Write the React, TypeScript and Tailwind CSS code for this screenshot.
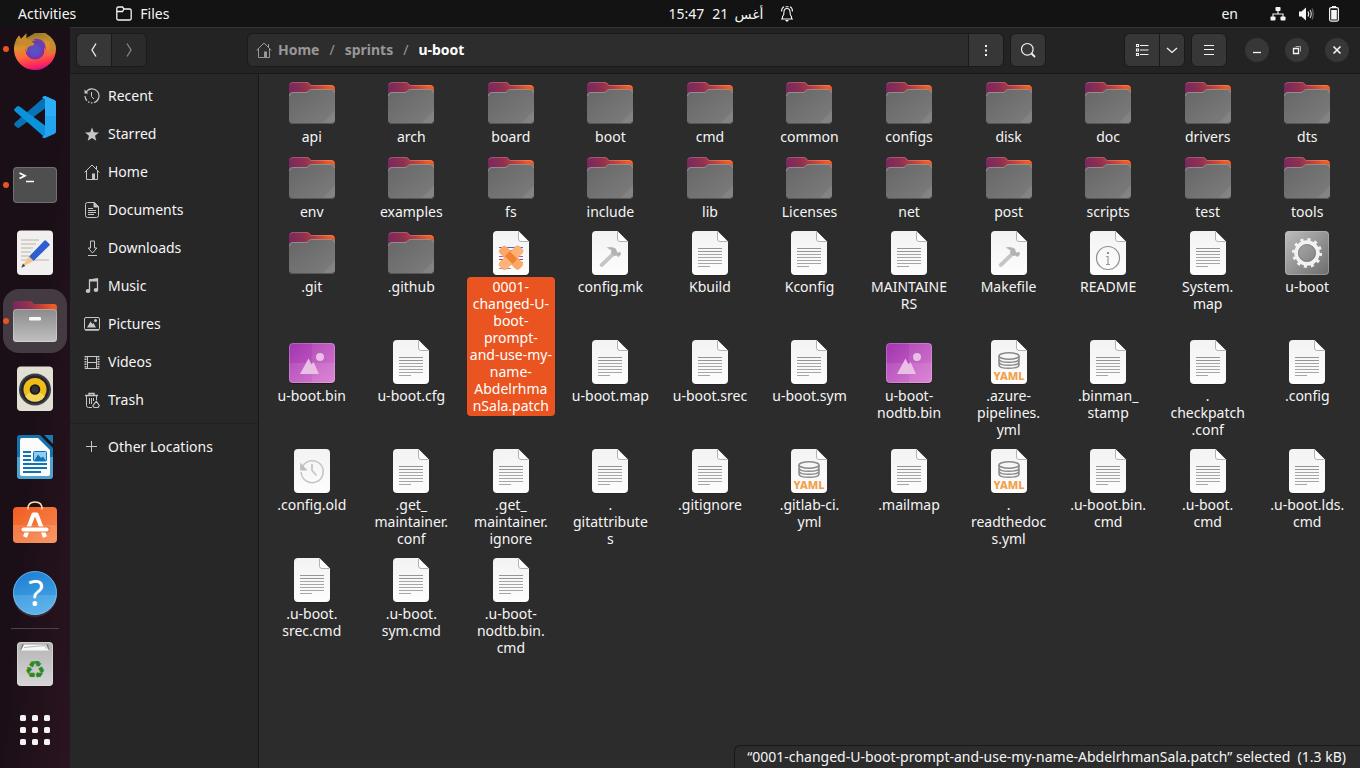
import type { ReactNode } from "react";

type Kind =
  | "folder"
  | "text"
  | "patch"
  | "make"
  | "info"
  | "exec"
  | "binary"
  | "yaml"
  | "backup";

type Item = { kind: Kind; label: string; selected?: boolean };

const folder = (label: string): Item => ({ kind: "folder", label });
const text = (label: string): Item => ({ kind: "text", label });

const items: Item[] = [
  ...["api", "arch", "board", "boot", "cmd", "common", "configs", "disk", "doc", "drivers", "dts"].map(folder),
  ...["env", "examples", "fs", "include", "lib", "Licenses", "net", "post", "scripts", "test", "tools"].map(folder),
  folder(".git"),
  folder(".github"),
  {
    kind: "patch",
    label: "0001-\nchanged-U-\nboot-\nprompt-\nand-use-my-\nname-\nAbdelrhma\nnSala.patch",
    selected: true,
  },
  { kind: "make", label: "config.mk" },
  text("Kbuild"),
  text("Kconfig"),
  text("MAINTAINE\nRS"),
  { kind: "make", label: "Makefile" },
  { kind: "info", label: "README" },
  text("System.\nmap"),
  { kind: "exec", label: "u-boot" },
  { kind: "binary", label: "u-boot.bin" },
  text("u-boot.cfg"),
];

const itemsAfterPatch: Item[] = [
  text("u-boot.map"),
  text("u-boot.srec"),
  text("u-boot.sym"),
  { kind: "binary", label: "u-boot-\nnodtb.bin" },
  { kind: "yaml", label: ".azure-\npipelines.\nyml" },
  text(".binman_\nstamp"),
  text(".\ncheckpatch\n.conf"),
  text(".config"),
  { kind: "backup", label: ".config.old" },
  text(".get_\nmaintainer.\nconf"),
  text(".get_\nmaintainer.\nignore"),
  text(".\ngitattribute\ns"),
  text(".gitignore"),
  { kind: "yaml", label: ".gitlab-ci.\nyml" },
  text(".mailmap"),
  { kind: "yaml", label: ".\nreadthedoc\ns.yml" },
  text(".u-boot.bin.\ncmd"),
  text(".u-boot.\ncmd"),
  text(".u-boot.lds.\ncmd"),
  text(".u-boot.\nsrec.cmd"),
  text(".u-boot.\nsym.cmd"),
  text(".u-boot-\nnodtb.bin.\ncmd"),
];

function Gradients() {
  return (
    <svg width="0" height="0" className="absolute" aria-hidden="true">
      <defs>
        <linearGradient id="folderBack" gradientUnits="userSpaceOnUse" x1="1" y1="16" x2="45" y2="5">
          <stop offset="0" stopColor="#772660" />
          <stop offset="0.35" stopColor="#8e3050" />
          <stop offset="0.6" stopColor="#b83c40" />
          <stop offset="0.9" stopColor="#ee5a26" />
        </linearGradient>
        <linearGradient id="folderFront" x1="0" y1="0" x2="1" y2="1">
          <stop offset="0" stopColor="#666666" />
          <stop offset="1" stopColor="#7d7d7d" />
        </linearGradient>
        <linearGradient id="paper" x1="0" y1="0" x2="0" y2="1">
          <stop offset="0" stopColor="#f3f3f3" />
          <stop offset="1" stopColor="#fdfdfd" />
        </linearGradient>
        <linearGradient id="binary" x1="0" y1="0" x2="1" y2="1">
          <stop offset="0" stopColor="#a035ae" />
          <stop offset="1" stopColor="#d870cf" />
        </linearGradient>
        <linearGradient id="exec" x1="0" y1="0" x2="1" y2="1">
          <stop offset="0" stopColor="#bdbdbd" />
          <stop offset="1" stopColor="#6c6c6c" />
        </linearGradient>
        <linearGradient id="fox" x1="0.35" y1="0" x2="0.55" y2="1">
          <stop offset="0" stopColor="#8a7628" />
          <stop offset="0.35" stopColor="#dc932e" />
          <stop offset="0.6" stopColor="#ff6a3c" />
          <stop offset="0.85" stopColor="#ff2b58" />
          <stop offset="1" stopColor="#d8108a" />
        </linearGradient>
        <radialGradient id="globe">
          <stop offset="0" stopColor="#4c5bc9" />
          <stop offset="0.6" stopColor="#6446bd" />
          <stop offset="1" stopColor="#7a2ba6" />
        </radialGradient>
        <linearGradient id="filesFront" x1="0" y1="0" x2="0" y2="1">
          <stop offset="0" stopColor="#8b8b8b" />
          <stop offset="1" stopColor="#c0c0c0" />
        </linearGradient>
        <linearGradient id="bag" x1="0" y1="0" x2="1" y2="1">
          <stop offset="0" stopColor="#f25c22" />
          <stop offset="1" stopColor="#f68a50" />
        </linearGradient>
        <linearGradient id="help" x1="0" y1="0" x2="0.3" y2="1">
          <stop offset="0" stopColor="#1c7bd0" />
          <stop offset="1" stopColor="#44a8e8" />
        </linearGradient>
        <linearGradient id="can" x1="0" y1="0" x2="0" y2="1">
          <stop offset="0" stopColor="#b4b4b4" />
          <stop offset="1" stopColor="#d6d6d6" />
        </linearGradient>
      </defs>
    </svg>
  );
}

function Svg48({ children }: { children: ReactNode }) {
  return (
    <svg viewBox="0 0 48 48" className="size-12 shrink-0" aria-hidden="true">
      {children}
    </svg>
  );
}

function Sheet({ children, fold = true }: { children: ReactNode; fold?: boolean }) {
  return (
    <Svg48>
      {fold ? (
        <>
          <path d="M10 3H32L42 13V42.500a4 4 0 0 1-4 4h-28A4 4 0 0 1 6 42.500V7A4 4 0 0 1 10 3Z" fill="#1c1c1c" />
          <path d="M10 2H31.500L42 12.500V42a4 4 0 0 1-4 4H10a4 4 0 0 1-4-4V6a4 4 0 0 1 4-4Z" fill="url(#paper)" />
          <path d="M31.500 2.500V10a2.500 2.500 0 0 0 2.500 2.500h7.500" fill="#fff" stroke="#b2b2b2" strokeWidth="1" />
        </>
      ) : (
        <>
          <rect x="6" y="3" width="36" height="43.500" rx="4" fill="#1c1c1c" />
          <rect x="6" y="2" width="36" height="44" rx="4" fill="url(#paper)" />
        </>
      )}
      {children}
    </Svg48>
  );
}

function FileIcon({ kind }: { kind: Kind }) {
  switch (kind) {
    case "folder":
      return (
        <Svg48>
          <path d="M1 18V7a4 4 0 0 1 4-4H19q1.200 0 2 .8L23 6H43a4 4 0 0 1 4 4V18Z" fill="url(#folderBack)" />
          <path d="M2 5.500a4 4 0 0 1 3-2H19q1 0 1.700 .8L23 6.500H43a3.500 3.500 0 0 1 3 2" fill="none" stroke="#fff" strokeOpacity=".2" />
          <path d="M1 17a4 4 0 0 1 4-4H18q1.200 0 2-.8l1.300-1.400q.8-.8 2-.8H43a4 4 0 0 1 4 4V41a4 4 0 0 1-4 4H5a4 4 0 0 1-4-4Z" fill="url(#folderFront)" />
          <path d="M1.500 17A3.500 3.500 0 0 1 5 13.500H18q1.200 0 2-.8l1.300-1.400q.8-.8 2-.8H43a3.500 3.500 0 0 1 3.500 3.500" fill="none" stroke="#8f8f8f" />
          <path d="M47 31V41a4 4 0 0 1-4 4H34Z" fill="#fff" fillOpacity=".07" />
          <path d="M2 43a3.500 3.500 0 0 0 3 1.500H43a3.500 3.500 0 0 0 3-1.500" fill="none" stroke="#575757" />
        </Svg48>
      );
    case "patch":
      return (
        <Sheet>
          <path d="M12 18.500H36" stroke="#4668d8" />
          <path d="M12 21.500H36" stroke="#e05a6a" />
          <path d="M12 27.500H36" stroke="#8d62c9" />
          <path d="M12 30.500H36" stroke="#d0313c" />
          <path d="M28 33.500H36" stroke="#7fb53c" />
          <path d="M12 39.500H24" stroke="#9a9a9a" />
          <rect x="10" y="24" width="28" height="9.500" rx="3.500" fill="#fba869" transform="rotate(45 24 28.700)" />
          <rect x="10" y="24" width="28" height="9.500" rx="3.500" fill="#ffb277" stroke="#ef9857" strokeWidth=".5" transform="rotate(-45 24 28.700)" />
          <rect x="18.500" y="25" width="11" height="7" rx="1" fill="#f08232" transform="rotate(45 24 28.700)" />
        </Sheet>
      );
    case "make":
      return (
        <Sheet>
          <path d="M14.500 34.500 27 22.500l2.500 3L17 37.500q-1.500 1-2.700-.3-1.200-1.500.2-2.700Z" fill="#c5c5c5" />
          <path d="M20.500 18.500q5-1.500 9.500 1.200l1 3.300 1.500.8 1.500-1.300 1.200 2.800-2.700 2.700-2.200-1.500-2.300.5-3-3 .5-2.500q-2-1.700-5-3Z" fill="#b3b3b3" />
        </Sheet>
      );
    case "info":
      return (
        <Sheet>
          <circle cx="24" cy="29" r="11.500" fill="none" stroke="#8e8e8e" strokeWidth="1.200" />
          <rect x="23" y="23" width="2" height="2" fill="#8e8e8e" />
          <path d="M22 27.500h2v8m-2 0h4" fill="none" stroke="#9a9a9a" strokeWidth="1.200" />
        </Sheet>
      );
    case "backup":
      return (
        <Sheet fold={false}>
          <path d="M14.500 19.500A11 11 0 1 1 13.200 25" fill="none" stroke="#c4c4c4" strokeWidth="1.500" />
          <path d="M12.200 15.500 V23.500H19.500Z" fill="#bdbdbd" />
          <path d="M24 17v6.500l4.500 5" fill="none" stroke="#c4c4c4" strokeWidth="1.700" />
        </Sheet>
      );
    case "yaml":
      return (
        <Sheet>
          <g fill="none" stroke="#8a8a8a" strokeWidth="1.500">
            <ellipse cx="24" cy="18" rx="10" ry="3.300" />
            <path d="M14 18v9c0 4.400 20 4.400 20 0v-9M14 21c0 4.400 20 4.400 20 0M14 24c0 4.400 20 4.400 20 0" />
          </g>
          <text x="24" y="42" textAnchor="middle" className="fill-[#f2a04a] font-['Noto_Sans',sans-serif] text-[11px] font-extrabold">
            YAML
          </text>
        </Sheet>
      );
    case "binary":
      return (
        <Svg48>
          <rect x="1" y="5" width="46" height="41" rx="4" fill="#1e1e1e" />
          <rect x="1" y="5" width="46" height="40" rx="4" fill="url(#binary)" />
          <path d="M24 5h19a4 4 0 0 1 4 4v32a4 4 0 0 1-4 4H24Z" fill="#fff" fillOpacity=".07" />
          <path d="M1 25H47V41a4 4 0 0 1-4 4H5a4 4 0 0 1-4-4Z" fill="#fff" fillOpacity=".09" />
          <rect x="1.500" y="5.500" width="45" height="39" rx="3.500" fill="none" stroke="#fff" strokeOpacity=".2" />
          <circle cx="32" cy="19" r="4" fill="#e9bfe6" />
          <path d="M12 36 20.500 20.500l3 6 2-2.500 5.500 12Z" fill="#e9bfe6" />
        </Svg48>
      );
    case "exec":
      return (
        <Svg48>
          <rect x="2" y="2" width="44" height="44" rx="4" fill="url(#exec)" />
          <rect x="2.500" y="2.500" width="43" height="43" rx="3.500" fill="none" stroke="#c9c9c9" strokeOpacity=".4" />
          <circle cx="24" cy="24" r="13.300" fill="none" stroke="#f4f2f1" strokeWidth="3.400" strokeDasharray="3 3.964" />
          <circle cx="24" cy="24" r="10.800" fill="none" stroke="#f4f2f1" strokeWidth="4" />
          <circle cx="24" cy="24" r="8.500" fill="none" stroke="#777" strokeWidth=".8" />
        </Svg48>
      );
    default:
      return (
        <Sheet>
          <path d="M12 19.500H36M12 22.500H36" stroke="#959595" />
          <path d="M12 25.500H36M12 28.500H36M12 31.500H36M12 34.500H36M12 37.500H24" stroke="#a6a6a6" />
        </Sheet>
      );
  }
}

function FileItem({ kind, label, selected }: Item) {
  return (
    <li className="min-w-0">
      <button type="button" className="flex w-full flex-col items-center">
        <FileIcon kind={kind} />
        {selected ? (
          <span className="h-[53px]">
            <span className="relative z-10 block rounded bg-[#e95420] px-[3px] pt-px pb-0.5 leading-[17px] whitespace-pre-line text-white">
              {label}
            </span>
          </span>
        ) : (
          <span className="block pt-px pb-px leading-[17px] whitespace-pre-line">{label}</span>
        )}
      </button>
    </li>
  );
}

function S16({ children, className = "size-4" }: { children: ReactNode; className?: string }) {
  return (
    <svg viewBox="0 0 16 16" className={className} fill="none" stroke="currentColor" strokeWidth="1" aria-hidden="true">
      {children}
    </svg>
  );
}

const homeIcon = (
  <S16 className="size-4 shrink-0">
    <path d="M.6 8.400 8 1l7.400 7.400M12.500 2v3.500M2.500 7v8.500h11V7" />
    <path d="M8 15.500V9.500h3v6Z" fill="currentColor" stroke="none" />
  </S16>
);

const places: { label: string; icon: ReactNode }[] = [
  {
    label: "Recent",
    icon: (
      <S16>
        <path d="M2 4.300A7 7 0 1 1 1 8" strokeWidth="1.200" strokeDasharray="27 1.500 1.500 1.500 1.500 1.500 20" />
        <path d="M.5 1.500V5.500H4.500Z" fill="currentColor" stroke="none" />
        <path d="M7.500 4v4.500l2.500 2.500" />
      </S16>
    ),
  },
  {
    label: "Starred",
    icon: (
      <S16>
        <path d="M8 1.500 9.800 6.200 15 6.500 11 9.800 12.300 14.700 8 12 3.700 14.700 5 9.800 1 6.500 6.200 6.200Z" fill="currentColor" stroke="none" />
      </S16>
    ),
  },
  { label: "Home", icon: homeIcon },
  {
    label: "Documents",
    icon: (
      <S16>
        <path d="M3.500 .5H10.500l4 4V13.500a2 2 0 0 1-2 2h-9a2 2 0 0 1-2-2V2.500a2 2 0 0 1 2-2Z" />
        <path d="M10 .5v4.500h4.500Z" fill="currentColor" />
        <path d="M4 6.500h5M4 8.500h8M4 10.500h8M4 12.500h6" />
      </S16>
    ),
  },
  {
    label: "Downloads",
    icon: (
      <S16>
        <path d="M6.500 1v7H4.200L8.500 13 12.800 8H10.500V1ZM4 15.500h9" />
      </S16>
    ),
  },
  {
    label: "Music",
    icon: (
      <S16>
        <path d="M5.500 12.500V2L13.500 1V11.500" strokeWidth="1.300" />
        <path d="M5.500 3V1.800L13.500.8V3Z" fill="currentColor" />
        <ellipse cx="4" cy="13" rx="2.300" ry="1.900" fill="currentColor" stroke="none" />
        <ellipse cx="12" cy="12" rx="2.300" ry="1.900" fill="currentColor" stroke="none" />
      </S16>
    ),
  },
  {
    label: "Pictures",
    icon: (
      <S16>
        <rect x=".5" y="1.500" width="15" height="12.500" rx="1.500" />
        <path d="M1 13H15V14.500H1Z" fill="currentColor" stroke="none" />
        <path d="M3 11.500 6.500 5.500 8.500 8 9.500 7 12 11.500Z" fill="currentColor" stroke="none" />
        <circle cx="11.500" cy="4.500" r="1.500" fill="currentColor" stroke="none" />
      </S16>
    ),
  },
  {
    label: "Videos",
    icon: (
      <S16>
        <path d="M3.500 2.500h9v12h-9ZM3.500 8.500h9" />
        <path d="M1.500 2v13M14.500 2v13" strokeWidth="2" strokeDasharray="1.500 1" />
        <path d="M1 2.500h3M1 14.500h3M12 2.500h3M12 14.500h3" />
      </S16>
    ),
  },
  {
    label: "Trash",
    icon: (
      <S16>
        <path d="M1 3.500h13M5 3V1.500h5V3" strokeWidth="1.400" />
        <path d="M2.500 4v9.500a2 2 0 0 0 2 2H8M12.500 4v4M5.500 6v6M7.500 6v6M9.500 6v3" />
        <path d="M9 13.500a3 2 0 0 0 1.500 2h3.500l1.300-2-3-4.200Z" strokeWidth="1.200" />
      </S16>
    ),
  },
];

type DockEntry = { label: string; icon: ReactNode; running?: boolean; active?: boolean };

const dock: DockEntry[] = [
  {
    label: "Firefox",
    running: true,
    icon: (
      <Svg48>
        <path d="M24 45A21 21 0 0 1 5 15L8 10.500 10 14 15.500 8V13L24 8H34Q45 15 45 24A21 21 0 0 1 24 45Z" fill="url(#fox)" />
        <path d="M28 8Q35 8.500 36 13Q42 19 37 31Q44 27 45 23Q44 13 34 8Z" fill="#b98f2c" fillOpacity=".75" />
        <circle cx="24" cy="25" r="9.500" fill="url(#globe)" />
        <path d="M5 15 8 10.500 10 14 15 9V14Q20 14.500 23.500 19Q22 21.500 19 21Q15 23 16.500 28Q14 25 15 21Q9 20 5 15Z" fill="#c98a2b" />
        <path d="M22 14Q31 13 34 19L36 31Q36 22 29 20Q27 16 22 14Z" fill="#6a3fae" />
      </Svg48>
    ),
  },
  {
    label: "Visual Studio Code",
    icon: (
      <Svg48>
        <path d="M34 3.500 34 15.500 8.500 34.500Q7 35.400 5.800 34.300L3.600 32.200Q2.500 31 3.600 29.900Z" fill="#0872b4" />
        <path d="M34 44.500V32.500L8.500 13.500Q7 12.600 5.800 13.700L3.600 15.800Q2.500 17 3.600 18.100Z" fill="#0a92dc" />
        <path d="M34 3 43.700 7.300Q45 8 45 9.500V38.500Q45 40 43.700 40.700L34 45Q32.500 45.500 31 44L34 42Z" fill="#23a4f1" />
        <path d="M34 3 43.700 7.300Q45 8 45 9.500V23H34V6L31 4.500Q32.500 2.700 34 3Z" fill="#2aaef5" />
      </Svg48>
    ),
  },
  {
    label: "Terminal",
    running: true,
    icon: (
      <Svg48>
        <rect x="2" y="6" width="44" height="36" rx="4" fill="#4e4e4e" />
        <rect x="2.500" y="6.500" width="43" height="35" rx="3.500" fill="none" stroke="#707070" />
        <path d="M8.500 12 14 14.700 8.500 17.500M15 20.500h8" fill="none" stroke="#fff" strokeWidth="1.700" />
      </Svg48>
    ),
  },
  {
    label: "Text Editor",
    icon: (
      <Svg48>
        <rect x="6" y="1.500" width="36" height="44.500" rx="4" fill="#f1f0ee" />
        <path d="M10 11H28M10 15H25M10 19H22M10 23H20M10 27H18M10 31H38" stroke="#cbc8ba" strokeWidth="1.600" />
        <path d="M18 27.500 33.500 11.500q.7-.7 1.400 0l3.500 3.500q.7.700 0 1.400L22.500 32Z" fill="#2f5ed0" />
        <path d="M18 27.500 22.500 32 10.300 38.500Z" fill="#f3c48c" />
        <path d="M12 34.500 10.300 38.800 14.300 37Z" fill="#444" />
      </Svg48>
    ),
  },
  {
    label: "Files",
    running: true,
    active: true,
    icon: (
      <Svg48>
        <path d="M2 18V7a3 3 0 0 1 3-3H20L23 7H43a3 3 0 0 1 3 3V18Z" fill="url(#folderBack)" />
        <rect x="2" y="12" width="44" height="33" rx="3.500" fill="url(#filesFront)" />
        <rect x="2.500" y="12.500" width="43" height="32" rx="3" fill="none" stroke="#fff" strokeOpacity=".25" />
        <rect x="18" y="20" width="12" height="3.500" rx="1.200" fill="#fafafa" />
      </Svg48>
    ),
  },
  {
    label: "Rhythmbox",
    icon: (
      <Svg48>
        <rect x="6" y="1.500" width="36" height="44.500" rx="4" fill="#e2dfd3" />
        <circle cx="24" cy="24.500" r="16" fill="#3e3e48" />
        <circle cx="24" cy="24.500" r="14" fill="#25252e" />
        <circle cx="24" cy="24.500" r="11.500" fill="#eebd1a" />
        <path d="M14 31a11.500 11.500 0 0 0 20 0L28 27H20Z" fill="#f6d658" />
        <circle cx="24" cy="24.500" r="5.300" fill="#1b1b1b" />
        <circle cx="24" cy="24.500" r="3.500" fill="#333" />
      </Svg48>
    ),
  },
  {
    label: "LibreOffice Writer",
    icon: (
      <Svg48>
        <path d="M9 2H29L42 15V42.500a3.500 3.500 0 0 1-3.500 3.500h-29A3.500 3.500 0 0 1 6 42.500V5A3 3 0 0 1 9 2Z" fill="#1472ac" />
        <path d="M6 24H42V42.500a3.500 3.500 0 0 1-3.500 3.500h-29A3.500 3.500 0 0 1 6 42.500Z" fill="#4fa3cf" />
        <path d="M33 2H42V11Z" fill="#1a7ab4" />
        <path d="M11 5H27L39 17V41a2 2 0 0 1-2 2H11a2 2 0 0 1-2-2V7a2 2 0 0 1 2-2Z" fill="#fbfbfb" />
        <path d="M12 19h8M12 23h8M12 27h8M12 31h24M12 35h24M12 39h18" stroke="#0f74b5" strokeWidth="2" />
        <rect x="22.500" y="18.500" width="13" height="9.500" rx="1" fill="#8fcdf2" stroke="#0f74b5" />
        <path d="M23 28 27 21.500 30 25 32 23.500 35 28Z" fill="#0f74b5" />
      </Svg48>
    ),
  },
  {
    label: "Ubuntu Software",
    icon: (
      <Svg48>
        <rect x="2" y="6" width="44" height="36" rx="4" fill="url(#bag)" />
        <path d="M2 24H46V38a4 4 0 0 1-4 4H6a4 4 0 0 1-4-4Z" fill="#fff" fillOpacity=".12" />
        <path d="M17 8.500Q16.500 1 24 1T31 8.500" fill="none" stroke="#fbe0b0" strokeWidth="1.500" />
        <path d="M14 36 22.500 13.500h3L34 36" fill="none" stroke="#fff" strokeWidth="4.200" strokeLinejoin="round" />
        <path d="M12 28.500H36" stroke="#f5723a" strokeWidth="6" strokeLinecap="round" />
        <path d="M12.500 28.500H35.500" stroke="#fff" strokeWidth="4.200" strokeLinecap="round" />
      </Svg48>
    ),
  },
  {
    label: "Help",
    icon: (
      <Svg48>
        <circle cx="24" cy="24" r="22" fill="url(#help)" />
        <path d="M2 26a22 22 0 0 0 44 0Z" fill="#fff" fillOpacity=".12" />
        <circle cx="24" cy="24" r="21.500" fill="none" stroke="#8cc8f4" strokeOpacity=".6" />
        <text x="25" y="37" textAnchor="middle" className="fill-white font-['Noto_Sans',sans-serif] text-[36px]">
          ?
        </text>
      </Svg48>
    ),
  },
];

function DockButton({ label, icon, running, active }: DockEntry) {
  return (
    <button
      type="button"
      aria-label={label}
      className={
        active
          ? "relative flex size-16 shrink-0 items-center justify-center rounded-2xl bg-[#433b41]"
          : "relative flex size-16 shrink-0 items-center justify-center rounded-2xl"
      }
    >
      {running && <span className="absolute left-0 size-1.5 rounded-full bg-[#e95420]" />}
      {icon}
    </button>
  );
}

const toolButton =
  "flex h-[34px] items-center justify-center border border-[#1a1a1a] bg-[#373737] text-[#f2f2f2]";

export default function App() {
  return (
    <div className="flex h-screen min-h-[600px] flex-col overflow-hidden bg-[#131313] font-['Noto_Sans','DejaVu_Sans',sans-serif] text-sm text-[#f5f5f5]">
      <Gradients />
      <header className="flex h-[27px] shrink-0 items-center px-[18px]">
        <div className="flex flex-1 items-center gap-10">
          <button type="button">Activities</button>
          <button type="button" className="flex items-center gap-2">
            <S16 className="size-4">
              <path d="M.8 12.500V2.500a1.500 1.500 0 0 1 1.500-1.500H6.500l1.500 2h5.500A1.700 1.700 0 0 1 15.200 4.700v7.800a1.500 1.500 0 0 1-1.500 1.500H2.300a1.500 1.500 0 0 1-1.500-1.500ZM.8 5.500H6.500L8 3" strokeWidth="1.300" />
            </S16>
            Files
          </button>
        </div>
        <button type="button" dir="ltr" className="flex items-center pl-26">
          <span>15:47</span>
          <span className="ml-2">21</span>
          <span lang="ar" dir="rtl" className="ml-1.5">أغس</span>
          <svg viewBox="0 0 16 16" className="ml-4 size-4" fill="none" stroke="currentColor" strokeWidth="1.100" aria-hidden="true">
            <path d="M2 13h12M3.500 13V10.500Q5 9.500 5 6Q5 2.500 8 2.500T11 6Q11 9.500 12.500 10.500V13M2.500 5.500Q2.500 2 5 .8M13.500 5.500Q13.500 2 11 .8M6.500 .7H9.500" />
            <path d="M6 14h4L8 16Z" fill="currentColor" stroke="none" />
          </svg>
        </button>
        <div className="flex flex-1 items-center justify-end">
          <span>en</span>
          <button type="button" aria-label="System menu" className="ml-8 flex items-center gap-3">
            <svg viewBox="0 0 16 16" className="size-4" fill="currentColor" aria-hidden="true">
              <rect x="5.500" y="1" width="5" height="4" rx=".8" />
              <rect x=".5" y="10.500" width="5" height="4" rx=".8" />
              <rect x="10.500" y="10.500" width="5" height="4" rx=".8" />
              <path d="M8 5v3M3 11V8h10v3" fill="none" stroke="currentColor" strokeWidth="1.100" />
            </svg>
            <svg viewBox="0 0 16 16" className="size-4" fill="none" stroke="currentColor" strokeWidth="1.200" aria-hidden="true">
              <path d="M1 5.500H3.500L8 1.500V14.500L3.500 10.500H1Z" fill="currentColor" stroke="none" />
              <path d="M10 5.500Q11.500 8 10 10.500" />
              <path d="M12 4Q14.500 8 12 12" opacity=".8" />
              <path d="M14 2.500Q16.500 8 14 13.500" opacity=".35" />
            </svg>
            <svg viewBox="0 0 16 16" className="size-4" fill="none" stroke="currentColor" strokeWidth="1.200" aria-hidden="true">
              <rect x="3.600" y="1.600" width="8.800" height="13.500" rx="1.500" />
              <rect x="5.200" y="4" width="5.600" height="9.500" fill="currentColor" stroke="none" />
              <path d="M6 .6h4" />
            </svg>
          </button>
        </div>
      </header>

      <div className="flex min-h-0 flex-1">
        <nav aria-label="Dock" className="flex w-[70px] shrink-0 flex-col items-center justify-end overflow-hidden bg-linear-to-br from-[#1b0f17] from-50% to-[#2a1421] pb-1.5">
          <div className="flex flex-col gap-1">
            {dock.map((d) => (
              <DockButton key={d.label} {...d} />
            ))}
          </div>
          <hr className="my-[3px] w-12 shrink-0 border-[#4b4348]" />
          <DockButton
            label="Trash"
            icon={
              <div className="relative flex items-center justify-center">
                <Svg48>
                  <rect x="6" y="2" width="36" height="44" rx="4" fill="url(#can)" />
                  <rect x="6.500" y="2.500" width="35" height="43" rx="3.500" fill="none" stroke="#dcdcdc" strokeOpacity=".7" />
                  <path d="M9.500 10 11 4.500H37L38.500 10Z" fill="#777" />
                  <path d="M10 10.500 13 4.500H35L38 10.500Z" fill="#f8f8f8" />
                  <path d="M13 7.500 34 5.500 36 9" fill="none" stroke="#9a9a9a" strokeWidth=".7" />
                </Svg48>
                <span aria-hidden="true" className="absolute bottom-1.5 font-['DejaVu_Sans',sans-serif] text-[24px] leading-6 text-[#2c8a1f]">
                  ♻
                </span>
              </div>
            }
          />
          <button type="button" aria-label="Show Applications" className="mt-0.5 flex size-16 shrink-0 items-center justify-center">
            <svg viewBox="0 0 30 30" className="size-[30px]" fill="#f4f2f3" aria-hidden="true">
              {[0, 12, 24].map((y) =>
                [0, 12, 24].map((x) => <rect key={`${x}-${y}`} x={x} y={y} width="6" height="6" rx="1.500" />),
              )}
            </svg>
          </button>
        </nav>

        <div className="flex min-w-0 flex-1 flex-col">
          <div className="flex h-[47px] shrink-0 items-center border-t border-b border-t-[#343434] border-b-[#181818] bg-[#232323] pr-[11px] pb-0.5 pl-1.5">
            <button type="button" aria-label="Back" className={`${toolButton} w-9 rounded-l-md`}>
              <S16>
                <path d="M10 1.500 6 8l4 6.500" strokeWidth="1.300" />
              </S16>
            </button>
            <button type="button" aria-label="Forward" className="-ml-px flex h-[34px] w-9 items-center justify-center rounded-r-md border border-[#1a1a1a] bg-[#2b2b2b] text-[#858585]">
              <S16>
                <path d="M6 1.500 10 8l-4 6.500" strokeWidth="1.300" />
              </S16>
            </button>

            <div className="ml-[100px] flex h-[34px] min-w-0 flex-1 items-center rounded-l-md border border-[#1a1a1a] bg-[#2d2d2d] pl-2 font-bold text-[#989898]">
              <a href="#home" className="flex items-center gap-1.5">
                {homeIcon}
                Home
              </a>
              <span className="mx-2.5 font-normal">/</span>
              <a href="#sprints">sprints</a>
              <span className="mx-2.5 font-normal">/</span>
              <a href="#u-boot" className="text-white">u-boot</a>
            </div>
            <button type="button" aria-label="Path menu" className={`${toolButton} -ml-px w-9 rounded-r-md`}>
              <S16>
                <path d="M7 3h2v2H7ZM7 7.500h2v2H7ZM7 12h2v2H7Z" fill="currentColor" stroke="none" />
              </S16>
            </button>
            <button type="button" aria-label="Search" className={`${toolButton} ml-1.5 w-9 rounded-md`}>
              <S16>
                <circle cx="7.300" cy="7.300" r="5.800" strokeWidth="1.200" />
                <path d="m11.500 11.500 3.500 3.500" strokeWidth="1.800" />
              </S16>
            </button>

            <div className="ml-[78px] flex">
              <button type="button" aria-label="List view" className={`${toolButton} w-9 rounded-l-md`}>
                <S16>
                  <path d="M6 3.500h8.500M6 8h8.500M6 12.500h8.500" strokeWidth="1.200" />
                  <path d="M2.500 2.500h2v2h-2ZM2.500 7h2v2h-2ZM2.500 11.500h2v2h-2Z" strokeWidth="1.100" />
                </S16>
              </button>
              <button type="button" aria-label="View options" className={`${toolButton} -ml-px w-[26px] rounded-r-md`}>
                <S16>
                  <path d="m3 6 5 4.500L13 6" strokeWidth="1.300" />
                </S16>
              </button>
            </div>
            <button type="button" aria-label="Menu" className={`${toolButton} ml-1.5 w-9 rounded-md`}>
              <S16>
                <path d="M3 3.500h10M3 7.500h10M3 12.500h10" strokeWidth="1.200" />
              </S16>
            </button>
            <div className="ml-[18px] flex gap-4">
              <button type="button" aria-label="Minimize" className="flex size-6 items-center justify-center rounded-full bg-[#373737]">
                <S16>
                  <path d="M4 10.500h8" strokeWidth="1.300" />
                </S16>
              </button>
              <button type="button" aria-label="Restore" className="flex size-6 items-center justify-center rounded-full bg-[#373737]">
                <S16>
                  <path d="M4.500 6.500h5v5h-5Z" strokeWidth="1.300" />
                  <path d="M6.500 4.500h5v5" opacity=".6" />
                </S16>
              </button>
              <button type="button" aria-label="Close" className="flex size-6 items-center justify-center rounded-full bg-[#373737]">
                <S16>
                  <path d="m4.500 4.500 7 7M11.500 4.500l-7 7" strokeWidth="1.600" />
                </S16>
              </button>
            </div>
          </div>

          <div className="flex min-h-0 flex-1">
            <aside className="w-[189px] shrink-0 border-r border-[#181818] bg-[#272727] pt-[3px]">
              <nav aria-label="Places">
                {places.map((p) => (
                  <a key={p.label} href={`#${p.label.toLowerCase()}`} className="flex h-[38px] items-center gap-2 pl-3.5">
                    <span className="text-[#c6c6c6]">{p.icon}</span>
                    {p.label}
                  </a>
                ))}
                <hr className="my-1 border-[#202020]" />
                <a href="#other-locations" className="flex h-[38px] items-center gap-2 pl-3.5">
                  <span className="text-[#c6c6c6]">
                    <S16>
                      <path d="M2 7.500h11M7.500 2v11" strokeWidth="1" />
                    </S16>
                  </span>
                  Other Locations
                </a>
              </nav>
            </aside>

            <main className="relative min-w-0 flex-1 bg-[#2c2c2c] px-[3px] pt-[5px]">
              <ul className="grid grid-cols-11 gap-y-2 text-center">
                {items.map((i) => (
                  <FileItem key={i.label} {...i} />
                ))}
                <li aria-hidden="true" />
                {itemsAfterPatch.map((i) => (
                  <FileItem key={i.label} {...i} />
                ))}
              </ul>
              <p className="absolute right-0 bottom-0 rounded-tl-md border-t border-l border-[#181818] bg-[#2c2c2c] pt-px pr-3.5 pb-px pl-3 whitespace-pre">
                “0001-changed-U-boot-prompt-and-use-my-name-AbdelrhmanSala.patch” selected  (1.3 kB)
              </p>
            </main>
          </div>
        </div>
      </div>
    </div>
  );
}
